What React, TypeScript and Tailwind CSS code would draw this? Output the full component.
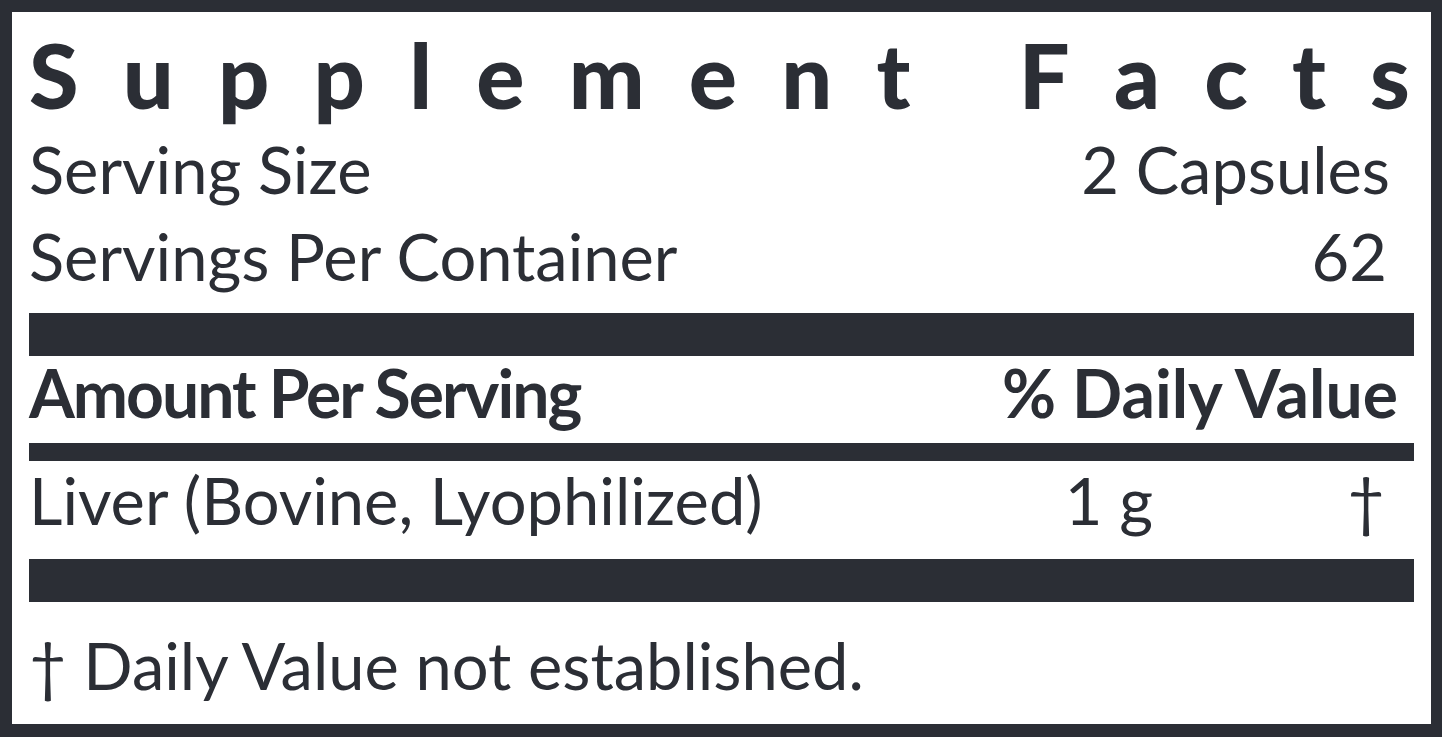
import React from 'react';

const ink = 'text-[#2b2e35]';

const TITLE = 'Supplement Facts';

const App: React.FC = () => {
  return (
    <div className="min-h-[737px] bg-white" style={{ fontFamily: 'Lato, "Noto Sans", sans-serif' }}>
      <div
        className={`w-[1442px] h-[737px] border-[#2b2e35] border-l-[12px] border-r-[11px] border-t-[12px] border-b-[13px] bg-white px-[17px] pt-[17px] flex flex-col ${ink}`}
      >
        {/* Title, spread across full width */}
        <div className="flex justify-between h-[90px] pr-[4px] text-[90px] leading-[90px] font-black">
          {TITLE.split('').map((ch, i) => (
            <span key={i} className={ch === ' ' ? 'w-[20px]' : ''}>
              {ch === ' ' ? '\u00a0' : ch}
            </span>
          ))}
        </div>

        <div className="mt-[7px] flex justify-between h-[87px] text-[65px] leading-[87px]">
          <span>Serving Size</span>
          <span className="pr-[24px]">2 Capsules</span>
        </div>
        <div className="flex justify-between h-[87px] text-[65px] leading-[87px]">
          <span>Servings Per Container</span>
          <span className="pr-[27px]">62</span>
        </div>

        <div className="mt-[13px] h-[43px] bg-[#2b2e35]" />

        <div className="flex justify-between h-[87px] pb-[14px] text-[66px] leading-[73px] font-bold">
          <span className="tracking-[-0.03em]">Amount Per Serving</span>
          <span className="pr-[16px]">% Daily Value</span>
        </div>

        <div className="h-[18px] bg-[#2b2e35]" />

        <div className="flex items-baseline h-[98px] pb-[19px] text-[65px] leading-[79px]">
          <span className="flex-1">Liver (Bovine, Lyophilized)</span>
          <span>1 g</span>
          <span className="w-[261px] pr-[29px] text-right">†</span>
        </div>

        <div className="h-[43px] bg-[#2b2e35]" />

        <div className="h-[122px] pt-[13px] text-[65px] leading-[100px]">
          <span>† Daily Value not established.</span>
        </div>
      </div>
    </div>
  );
};

export default App;
